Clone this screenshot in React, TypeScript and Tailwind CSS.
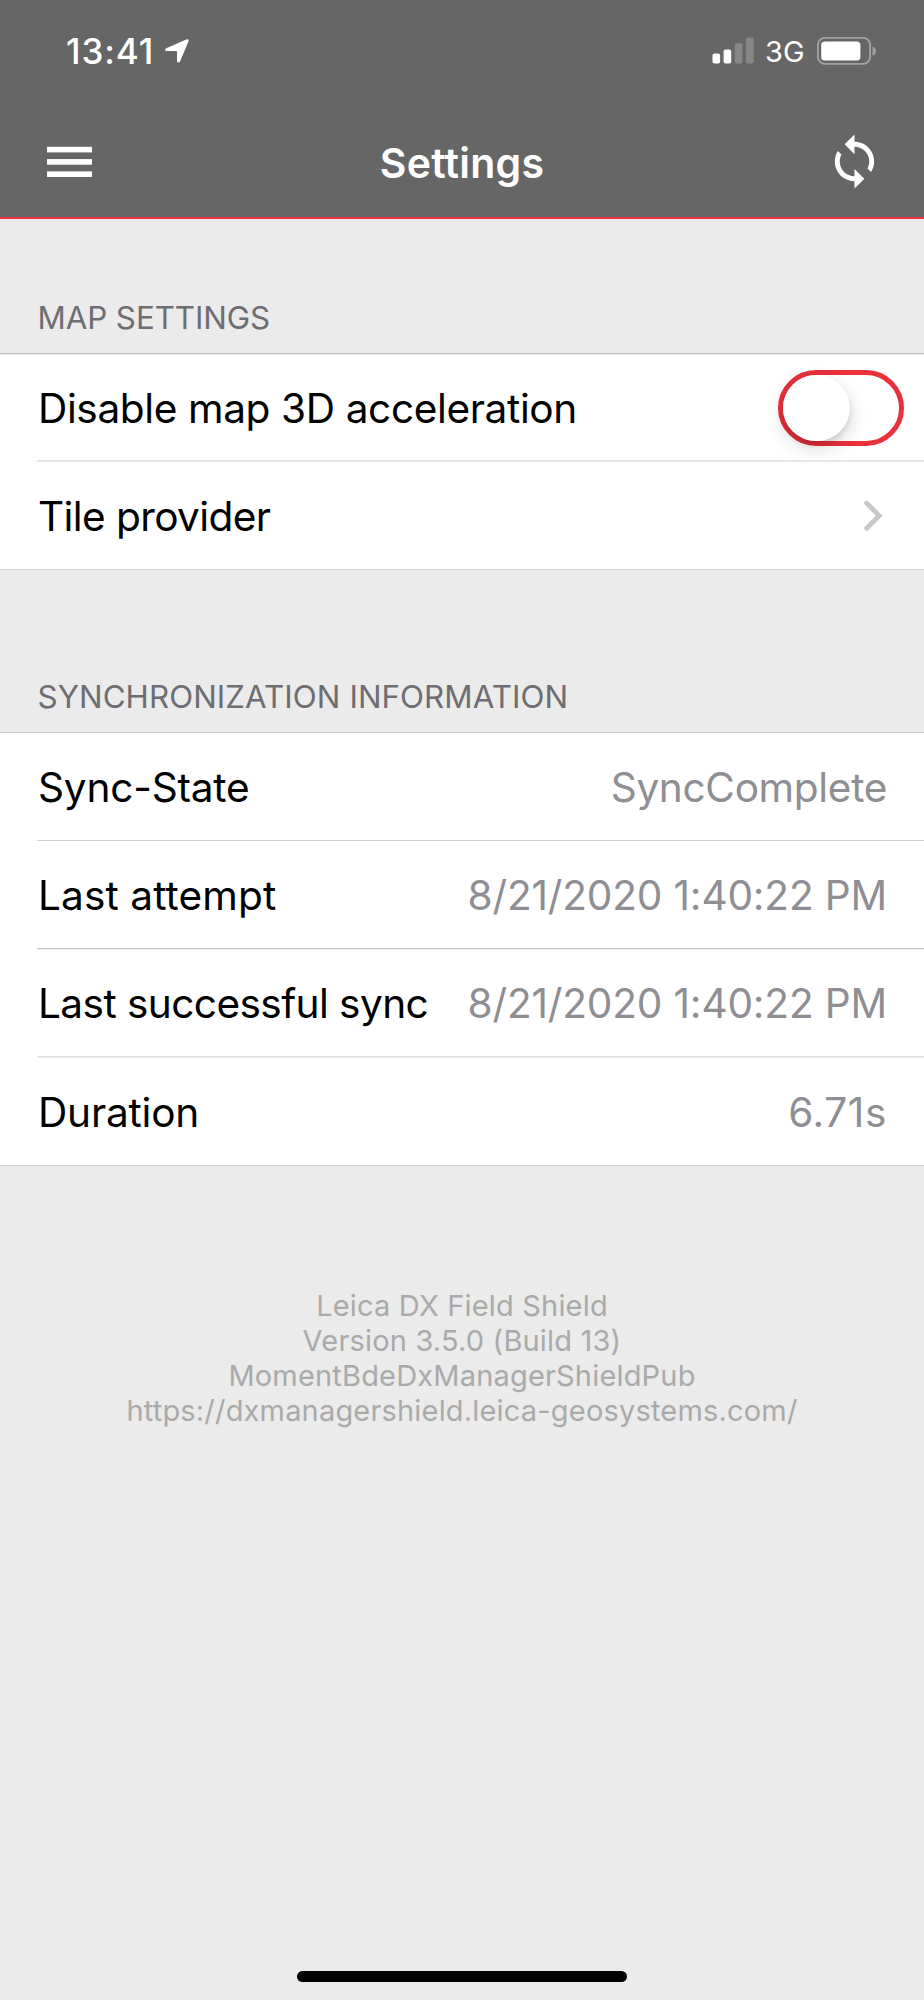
import React from 'react';
import type { ReactNode } from 'react';

function StatusBar() {
  return (
    <div className="flex h-[101px] items-center justify-between pl-[66px] pr-[47px]">
      <div className="flex items-center">
        <span className="w-[99px] pt-[1px] text-[35px] font-[550] leading-none tracking-[0.9px]">13:41</span>
        <svg className="block h-[24px] w-[24px]" viewBox="0 0 24 24" fill="#fff">
          <path d="M1.2 9.2 21.3 .4C23 -.3 24.1 .7 23.5 2.3L15.2 22.3C14.4 24.1 12 23.9 12 21.7V12.9C12 12.2 11.7 12 11 12H2C-.2 12 -.6 10 1.2 9.2Z" />
        </svg>
      </div>
      <div className="flex items-center">
        <svg className="block h-[28px] w-[42px]" viewBox="0 0 42 28" fill="#fff">
          <rect x="0.5" y="16.5" width="7.6" height="10" rx="2" />
          <rect x="11.6" y="12.4" width="7.6" height="14.1" rx="2" />
          <rect x="22.8" y="6.2" width="7.6" height="20.3" rx="2" fillOpacity=".21" />
          <rect x="33.9" y="0.5" width="7.8" height="26" rx="2" fillOpacity=".21" />
        </svg>
        <span className="ml-[11px] w-[52px] pt-[2px] text-[29px] leading-none">3G</span>
        <svg className="block h-[28px] w-[60px]" viewBox="0 0 60 28">
          <rect x="0.9" y="0.9" width="52.2" height="26" rx="7" fill="none" stroke="#a2a2a2" strokeWidth="1.9" />
          <rect x="4.2" y="4.4" width="39.2" height="19.2" rx="3.6" fill="#fff" />
          <path d="M55.6 9.4c2.1.8 3.4 2.6 3.4 4.7s-1.3 3.9-3.4 4.7z" fill="#a2a2a2" />
        </svg>
      </div>
    </div>
  );
}

function NavBar() {
  return (
    <div className="grid h-[116px] grid-cols-[1fr_auto_1fr] items-center pl-[47px] pr-[40px] pt-[6px]">
      <svg className="block h-[32px] w-[45px]" viewBox="0 0 45 32" fill="#fff">
        <rect x="0" y="0.8" width="45" height="5.6" />
        <rect x="0" y="13.1" width="45" height="5.6" />
        <rect x="0" y="25.4" width="45" height="5.6" />
      </svg>
      <h1 className="-ml-[7px] pt-[3px] text-[41px] font-[580] leading-none tracking-[0.25px]">Settings</h1>
      <svg className="mb-[1px] block h-[59px] w-[59px] justify-self-end" viewBox="0 0 24 24" fill="#fff">
        <path d="M12 4V1L8 5l4 4V6c3.31 0 6 2.69 6 6 0 1.01-.25 1.97-.7 2.8l1.46 1.46C19.54 15.03 20 13.57 20 12c0-4.42-3.58-8-8-8zm0 14c-3.31 0-6-2.69-6-6 0-1.01.25-1.97.7-2.8L5.24 7.74C4.46 8.97 4 10.43 4 12c0 4.42 3.58 8 8 8v3l4-4-4-4v3z" />
      </svg>
    </div>
  );
}

function Row({ label, tracking, children, className }: { label: string; tracking: string; children: ReactNode; className: string }) {
  return (
    <div className={`flex items-center justify-between pl-[38px] pr-[37px] pt-[2px] ${className}`}>
      <span className={`whitespace-nowrap text-black ${tracking}`}>{label}</span>
      {children}
    </div>
  );
}

function Value({ tracking, children }: { tracking: string; children: ReactNode }) {
  return <span className={`whitespace-nowrap text-[#8e8e93] ${tracking}`}>{children}</span>;
}

function SectionTitle({ className, children }: { className: string; children: ReactNode }) {
  return <h2 className={`flex items-end pb-[15px] pl-[37.5px] text-[31.3px] leading-[40px] text-[#6d6d72] ${className}`}>{children}</h2>;
}

function Toggle() {
  return (
    <button
      role="switch"
      aria-checked={false}
      className="-mr-[17px] -mt-[1px] flex h-[76px] w-[126px] items-center rounded-full border-[5px] border-[#e9303b] bg-white"
    >
      <span className="block h-[66px] w-[67px] rounded-full bg-white shadow-[0_7px_20px_rgba(0,0,0,0.16),0_4px_5px_rgba(0,0,0,0.1)]" />
    </button>
  );
}

export default function App() {
  return (
    <div className="flex h-[2000px] w-[924px] flex-col overflow-hidden bg-[#ebebeb] font-['Inter',sans-serif]">
      <header className="h-[219px] shrink-0 border-b-2 border-[#f4303c] bg-[#666666] text-white">
        <StatusBar />
        <NavBar />
      </header>

      <SectionTitle className="h-[134px] tracking-[-0.07px]">MAP SETTINGS</SectionTitle>
      <section className="bg-white text-[40.6px] leading-[50px]">
        <div className="h-px bg-[#c1c1c4]" />
        <div className="h-px bg-[#ececec]" />
        <Row label="Disable map 3D acceleration" tracking="tracking-[-0.38px]" className="h-[105px]">
          <Toggle />
        </Row>
        <div className="ml-[37px] h-[2px] bg-[#e6e6e7]" />
        <Row label="Tile provider" tracking="tracking-[-0.6px]" className="h-[107px]">
          <svg className="mb-[1px] mr-[3px] block h-[32px] w-[22px]" viewBox="0 0 22 32" fill="none" stroke="#c7c7cc" strokeWidth="4.8" strokeLinecap="round" strokeLinejoin="miter">
            <path d="M4.7 3.2 17.2 15.7 4.7 28.2" />
          </svg>
        </Row>
        <div className="h-px bg-[#d0d0d2]" />
      </section>

      <SectionTitle className="h-[162px] tracking-[0.08px]">SYNCHRONIZATION INFORMATION</SectionTitle>
      <section className="bg-white text-[40.6px] leading-[50px]">
        <div className="h-px bg-[#cdcdcf]" />
        <Row label="Sync-State" tracking="tracking-[-0.2px]" className="h-[107px]">
          <Value tracking="tracking-[-0.34px]">SyncComplete</Value>
        </Row>
        <div className="ml-[37px] h-px bg-[#d0d0d2]" />
        <Row label="Last attempt" tracking="tracking-[0.1px]" className="h-[107px]">
          <Value tracking="tracking-[-0.17px]">8/21/2020 1:40:22 PM</Value>
        </Row>
        <div className="ml-[37px] h-px bg-[#c4c4c6]" />
        <div className="ml-[37px] h-px bg-[#f0f0f0]" />
        <Row label="Last successful sync" tracking="tracking-[-0.58px]" className="h-[106px]">
          <Value tracking="tracking-[-0.17px]">8/21/2020 1:40:22 PM</Value>
        </Row>
        <div className="ml-[37px] h-px bg-[#e0e0e2]" />
        <div className="ml-[37px] h-px bg-[#ececec]" />
        <Row label="Duration" tracking="tracking-[-0.2px]" className="h-[107px]">
          <Value tracking="tracking-[0.6px]">6.71s</Value>
        </Row>
        <div className="h-px bg-[#d0d0d2]" />
      </section>

      <footer className="mt-[121.5px] text-center text-[29px] leading-[35.2px] tracking-[0.18px] text-[#aaaaaa]">
        <p>Leica DX Field Shield</p>
        <p>Version 3.5.0 (Build 13)</p>
        <p>MomentBdeDxManagerShieldPub</p>
        <p>https://dxmanagershield.leica-geosystems.com/</p>
      </footer>

      <div className="mb-[18px] mt-auto h-[11px] w-[330px] shrink-0 self-center rounded-full bg-black" />
    </div>
  );
}
